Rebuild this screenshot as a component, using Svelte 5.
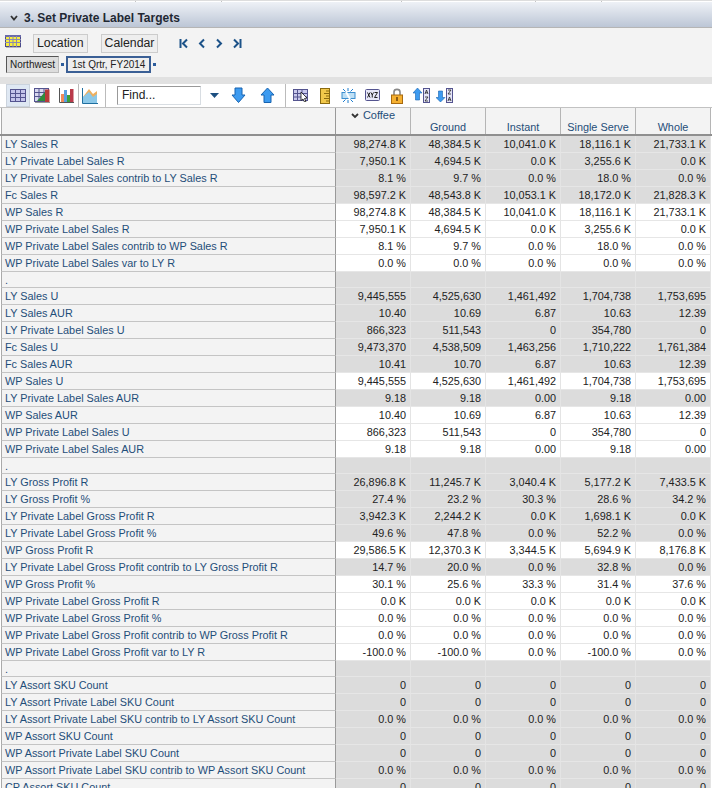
<script>
  const g = 1, w = 0;
  const rows = [
    ['LY Sales R', g, ['98,274.8 K','48,384.5 K','10,041.0 K','18,116.1 K','21,733.1 K']],
    ['LY Private Label Sales R', g, ['7,950.1 K','4,694.5 K','0.0 K','3,255.6 K','0.0 K']],
    ['LY Private Label Sales contrib to LY Sales R', g, ['8.1 %','9.7 %','0.0 %','18.0 %','0.0 %']],
    ['Fc Sales R', g, ['98,597.2 K','48,543.8 K','10,053.1 K','18,172.0 K','21,828.3 K']],
    ['WP Sales R', w, ['98,274.8 K','48,384.5 K','10,041.0 K','18,116.1 K','21,733.1 K']],
    ['WP Private Label Sales R', w, ['7,950.1 K','4,694.5 K','0.0 K','3,255.6 K','0.0 K']],
    ['WP Private Label Sales contrib to WP Sales R', w, ['8.1 %','9.7 %','0.0 %','18.0 %','0.0 %']],
    ['WP Private Label Sales var to LY R', w, ['0.0 %','0.0 %','0.0 %','0.0 %','0.0 %']],
    ['.', g, ['','','','','']],
    ['LY Sales U', g, ['9,445,555','4,525,630','1,461,492','1,704,738','1,753,695']],
    ['LY Sales AUR', g, ['10.40','10.69','6.87','10.63','12.39']],
    ['LY Private Label Sales U', g, ['866,323','511,543','0','354,780','0']],
    ['Fc Sales U', g, ['9,473,370','4,538,509','1,463,256','1,710,222','1,761,384']],
    ['Fc Sales AUR', g, ['10.41','10.70','6.87','10.63','12.39']],
    ['WP Sales U', w, ['9,445,555','4,525,630','1,461,492','1,704,738','1,753,695']],
    ['LY Private Label Sales AUR', g, ['9.18','9.18','0.00','9.18','0.00']],
    ['WP Sales AUR', w, ['10.40','10.69','6.87','10.63','12.39']],
    ['WP Private Label Sales U', w, ['866,323','511,543','0','354,780','0']],
    ['WP Private Label Sales AUR', w, ['9.18','9.18','0.00','9.18','0.00']],
    ['.', g, ['','','','','']],
    ['LY Gross Profit R', g, ['26,896.8 K','11,245.7 K','3,040.4 K','5,177.2 K','7,433.5 K']],
    ['LY Gross Profit %', g, ['27.4 %','23.2 %','30.3 %','28.6 %','34.2 %']],
    ['LY Private Label Gross Profit R', g, ['3,942.3 K','2,244.2 K','0.0 K','1,698.1 K','0.0 K']],
    ['LY Private Label Gross Profit %', g, ['49.6 %','47.8 %','0.0 %','52.2 %','0.0 %']],
    ['WP Gross Profit R', w, ['29,586.5 K','12,370.3 K','3,344.5 K','5,694.9 K','8,176.8 K']],
    ['LY Private Label Gross Profit contrib to LY Gross Profit R', g, ['14.7 %','20.0 %','0.0 %','32.8 %','0.0 %']],
    ['WP Gross Profit %', w, ['30.1 %','25.6 %','33.3 %','31.4 %','37.6 %']],
    ['WP Private Label Gross Profit R', w, ['0.0 K','0.0 K','0.0 K','0.0 K','0.0 K']],
    ['WP Private Label Gross Profit %', w, ['0.0 %','0.0 %','0.0 %','0.0 %','0.0 %']],
    ['WP Private Label Gross Profit contrib to WP Gross Profit R', w, ['0.0 %','0.0 %','0.0 %','0.0 %','0.0 %']],
    ['WP Private Label Gross Profit var to LY R', w, ['-100.0 %','-100.0 %','0.0 %','-100.0 %','0.0 %']],
    ['.', g, ['','','','','']],
    ['LY Assort SKU Count', g, ['0','0','0','0','0']],
    ['LY Assort Private Label SKU Count', g, ['0','0','0','0','0']],
    ['LY Assort Private Label SKU contrib to LY Assort SKU Count', g, ['0.0 %','0.0 %','0.0 %','0.0 %','0.0 %']],
    ['WP Assort SKU Count', g, ['0','0','0','0','0']],
    ['WP Assort Private Label SKU Count', g, ['0','0','0','0','0']],
    ['WP Assort Private Label SKU contrib to WP Assort SKU Count', g, ['0.0 %','0.0 %','0.0 %','0.0 %','0.0 %']],
    ['CP Assort SKU Count', g, ['0','0','0','0','0']]
  ];
  const heads = ['Ground','Instant','Single Serve','Whole'];
</script>

<div class="page">
  <div class="ticks"><span class="t1"></span><span class="t2"></span><span class="t3"></span><span class="t4"></span><span class="t5"></span></div>
  <header class="title">
    <svg class="chev" width="8" height="6" viewBox="0 0 8 6"><path d="M1 1 4 4.500 7 1" fill="none" stroke="#333" stroke-width="1.800"/></svg>
    <h1>3. Set Private Label Targets</h1>
  </header>

  <section class="pov">
    <div class="pov-top">
      <svg class="grid-ico" width="16" height="13" viewBox="0 0 16 13">
        <rect x="0.5" y="0.5" width="15" height="11" fill="#f7ee3c" stroke="#4a4a8c"/>
        <rect x="0" y="0" width="16" height="2" fill="#6a6aa8"/>
        <path d="M0 4.500H16M0 7.500H16M4.500 1V12M8 1V12M11.500 1V12" stroke="#8a8ab0" stroke-width="1"/>
        <path d="M1 12.500H16" stroke="#bbb"/>
      </svg>
      <button class="dim">Location</button>
      <button class="dim cal">Calendar</button>
      <div class="nav">
        <svg width="10" height="11" viewBox="0 0 10 11"><path d="M1.500 1V10" stroke="#1c5288" stroke-width="2"/><path d="M8 1.500 4 5.500 8 9.500" fill="none" stroke="#1c5288" stroke-width="2"/></svg>
        <svg width="8" height="11" viewBox="0 0 8 11"><path d="M6 1.500 2 5.500 6 9.500" fill="none" stroke="#1c5288" stroke-width="2"/></svg>
        <svg width="8" height="11" viewBox="0 0 8 11"><path d="M2 1.500 6 5.500 2 9.500" fill="none" stroke="#1c5288" stroke-width="2"/></svg>
        <svg width="10" height="11" viewBox="0 0 10 11"><path d="M2 1.500 6 5.500 2 9.500" fill="none" stroke="#1c5288" stroke-width="2"/><path d="M8.500 1V10" stroke="#1c5288" stroke-width="2"/></svg>
      </div>
    </div>
    <div class="pov-bottom">
      <span class="chip">Northwest</span><i class="dot"></i>
      <span class="chip sel">1st Qrtr, FY2014</span><i class="dot"></i>
    </div>
  </section>
  <div class="gap"></div>

  <div class="toolbar">
    <span class="tb first active">
      <svg width="16" height="13" viewBox="0 0 16 13"><rect x=".5" y=".5" width="15" height="12" fill="#c4c4ea" stroke="#54548f"/><path d="M0 4.500H16M0 8.500H16M5.500 0V13M10.500 0V13" stroke="#54548f"/></svg>
    </span>
    <span class="tb second">
      <svg width="16" height="15" viewBox="0 0 16 15"><rect x=".5" y=".5" width="14" height="13" fill="#d8d8ee" stroke="#54548f"/><path d="M0 4.500H14M0 8.500H14M5 0V13M10 0V13" stroke="#54548f"/><path d="M3 13 11 4V13Z" fill="#2f8c3c"/><path d="M11 1.500H15.500V14H11Z" fill="#b93a3a"/><path d="M1 14.500H16" stroke="#999"/></svg>
    </span>
    <span class="tb sep third">
      <svg width="15" height="15" viewBox="0 0 15 15"><path d="M.5 0V14.500H15" fill="none" stroke="#555"/><rect x="2" y="6" width="3" height="8" fill="#f08a5a"/><rect x="5" y="2" width="3" height="12" fill="#5aa0e0"/><rect x="8" y="7" width="3" height="7" fill="#3aa03a"/><rect x="11" y="1" width="3.500" height="13" fill="#b93a4a"/></svg>
    </span>
    <span class="tb sep fourth">
      <svg width="16" height="16" viewBox="0 0 16 16"><path d="M.5 0V15.500H16" fill="none" stroke="#1f6f9f"/><path d="M1 9 7 1 11 6 15 3V9Z" fill="#eeb060"/><path d="M1 15V9L7 4 11 9 15 6V15Z" fill="#8cc8e8"/></svg>
    </span>
    <span class="find">Find...</span>
    <svg class="drop" width="9" height="5" viewBox="0 0 9 5"><path d="M0 0H9L4.500 5Z" fill="#1c4f80"/></svg>
    <svg class="arrow" width="15" height="17" viewBox="0 0 15 17"><path d="M4 1H11V8H14L7.500 15.500 1 8H4Z" fill="#3d9bf0" stroke="#1763b0"/></svg>
    <svg class="arrow up" width="15" height="17" viewBox="0 0 15 17"><path d="M7.500 1 14 8H11V15.500H4V8H1Z" fill="#3d9bf0" stroke="#1763b0"/></svg>
    <span class="bar"></span>
    <span class="icons">
      <svg class="i1" width="15" height="13" viewBox="0 0 15 13"><rect x=".5" y=".5" width="14" height="11" fill="#c9c9ec" stroke="#54548f"/><path d="M0 4.500H14M0 8H14M4.500 0V12M9 0V12" stroke="#54548f"/><path d="M8 3 14 9 11.500 9.500 13 12.500 11.500 13 10 10 8 11.500Z" fill="#fff" stroke="#111" stroke-width=".8"/></svg>
      <svg class="i2" width="10" height="16" viewBox="0 0 10 16"><rect x=".5" y=".5" width="9" height="15" fill="#f2c84a" stroke="#8a6a10"/><path d="M6 3H9M4 5.500H9M6 8H9M4 10.500H9M6 13H9" stroke="#8a6a10"/></svg>
      <svg class="i3" width="15" height="15" viewBox="0 0 15 15"><rect x="1" y="4.500" width="13" height="6" fill="#bfe0f5" stroke="#3d8fd0"/><path d="M7 0V3M2 1 4.500 3.500M12 1 9.500 3.500M7 12V15M2 14 4.500 11.500M12 14 9.500 11.500" stroke="#1f7fd0"/><path d="M5 4 9 11" stroke="#fff" stroke-width="2"/></svg>
      <svg class="i4" width="15" height="13" viewBox="0 0 15 13"><rect x=".5" y=".5" width="14" height="11" rx="1" fill="#e6e6f8" stroke="#54548f"/><path d="M2.500 3.500 5 8.500M5 3.500 2.500 8.500M6 3.500 7.250 6V8.500M8.500 3.500 7.250 6M9.500 3.500H12.500L9.500 8.500H12.500" fill="none" stroke="#222" stroke-width="1"/></svg>
      <svg class="i5" width="12" height="16" viewBox="0 0 12 16"><path d="M3 7V4C3 .5 9 .5 9 4V7" fill="none" stroke="#888" stroke-width="1.600"/><rect x=".5" y="7" width="11" height="8.500" fill="#f5b030" stroke="#a86a10"/><path d="M6 9V13" stroke="#6a4008" stroke-width="1.500"/></svg>
      <svg class="i6" width="17" height="15" viewBox="0 0 17 15"><path d="M4.500 0 9 5H6.500V12H2.500V5H0Z" fill="#3d9bf0" stroke="#1763b0" stroke-width=".6"/><rect x="10.500" y=".5" width="6" height="14" fill="#e6e6f8" stroke="#54548f"/><path d="M12 6 13.500 2 15 6M12.500 4.800H14.500M12 9H15L12 13H15" fill="none" stroke="#222" stroke-width=".8"/></svg>
      <svg class="i7" width="17" height="15" viewBox="0 0 17 15"><path d="M2.500 3V9.500H0L4.500 14 9 9.500H6.500V3Z" fill="#3d9bf0" stroke="#1763b0" stroke-width=".6"/><rect x="10.500" y=".5" width="6" height="14" fill="#e6e6f8" stroke="#54548f"/><path d="M12 2H15L12 6H15M12 13 13.500 9 15 13M12.500 11.800H14.500" fill="none" stroke="#222" stroke-width=".8"/></svg>
    </span>
  </div>

  <div class="table">
    <div class="row head">
      <div class="label"></div>
      <div class="hcell top">
        <svg width="8" height="6" viewBox="0 0 8 6"><path d="M1 1 4 4 7 1" fill="none" stroke="#333" stroke-width="1.800"/></svg>
        <span>Coffee</span>
      </div>
      {#each heads as h}<div class="hcell">{h}</div>{/each}
    </div>
    {#each rows as r}
      <div class="row" class:short={r[0] === '.'}>
        <div class="label">{r[0]}</div>
        {#each r[2] as v}<div class="cell" class:grey={r[1]}>{v}</div>{/each}
      </div>
    {/each}
  </div>
</div>

<style>
  :global(body) { margin: 0; background: #fff; }
  .page { width: 712px; height: 788px; overflow: hidden; font-family: "Liberation Sans", Arial, sans-serif; font-size: 10.85px; color: #222; }
  .ticks { height: 2px; display: flex; background: #fff; border-top: 1px solid #ddd; box-sizing: border-box; }
  .ticks span { width: 1px; background: #c4c4c4; }
  .t1 { margin-left: 135px; } .t2 { margin-left: 85px; } .t3 { margin-left: 179px; } .t4 { margin-left: 133px; } .t5 { margin-left: 65px; }
  .title { height: 26px; background: linear-gradient(#eef1f6, #bcc6d6); border-bottom: 1px solid #b5b5b5; box-sizing: border-box; display: flex; align-items: center; padding: 6px 0 0 10px; }
  .chev { margin-right: 6px; }
  h1 { margin: 0; font-size: 12px; font-weight: bold; color: #1f2833; }
  .pov { height: 49px; background: #f3f3f3; box-sizing: border-box; padding: 5px 0 0 5px; }
  .pov-top { display: flex; align-items: center; height: 20px; }
  .grid-ico { margin-bottom: 3px; }
  .dim { height: 19px; font: 12.3px "Liberation Sans", Arial, sans-serif; color: #222; background: #eee; border: 1px solid #ccc; padding: 0 3px; margin-left: 12px; }
  .cal { margin-left: 13px; }
  .nav { display: flex; align-items: center; gap: 9px; margin-left: 21px; }
  .pov-bottom { display: flex; align-items: center; margin-top: 3px; }
  .chip { height: 17px; line-height: 16px; box-sizing: border-box; font-size: 10px; padding: 0 3px; background: #ddd; border: 1px solid #bbb; border-left-color: #555; border-top-color: #555; color: #222; margin-left: 1px; }
  .sel { border: 2px solid #3a5f95; background: #eee; padding: 0 4px; line-height: 13px; margin-left: 2px; height: 17px; }
  .dot { width: 3px; height: 3px; background: #2b5c9c; margin-left: 2px; }
  .gap { height: 7px; background: #e1e1e1; }
  .toolbar { height: 23px; display: flex; align-items: center; background: #fff; }
  .tb { height: 23px; box-sizing: border-box; display: flex; align-items: center; flex: none; justify-content: center; }
  .first { margin-left: 6px; width: 24px; }
  .active { background: #dfe8f3; border: 1px solid #cbd3dd; }
  .second { width: 24px; }
  .tb.sep { border-right: 1px solid #bbb; }
  .third { width: 25px; }
  .fourth { width: 27px; padding-right: 4px; }
  .find { width: 84px; height: 19px; line-height: 17px; box-sizing: border-box; border: 1px solid #d8dde2; border-top-color: #999; border-left-color: #999; margin-left: 11px; padding-left: 4px; font-size: 12px; color: #222; }
  .drop { margin-left: 9px; }
  .arrow { margin-left: 12px; }
  .arrow.up { margin-left: 14px; }
  .bar { width: 1px; height: 23px; background: #bbb; margin-left: 10px; }
  .icons { display: flex; align-items: center; margin-left: 7px; }
  .i2 { margin-left: 12px; } .i3 { margin-left: 11px; } .i4 { margin-left: 9px; } .i5 { margin-left: 11px; } .i6 { margin-left: 10px; } .i7 { margin-left: 6px; }
  .table { border-top: 1px solid #c2c2c2; }
  .row { display: flex; height: 17px; }
  .row.short { height: 16px; }
  .row.head { height: 28px; box-sizing: border-box; border-bottom: 2px solid #8f8f8f; }
  .label { width: 335px; flex: none; box-sizing: border-box; background: #f3f3f3; border-left: 1px solid #aaa; border-right: 1px solid #999; border-bottom: 1px solid #c4c4c4; padding-left: 3px; line-height: 16px; color: #1f4e79; margin-left: 1px; white-space: nowrap; }
  .head .label { border-bottom: none; }
  .cell { width: 75px; flex: none; box-sizing: border-box; text-align: right; padding-right: 4px; line-height: 16px; border-right: 1px solid #e4e4e4; border-bottom: 1px solid #e6e6e6; background: #fff; }
  .cell.grey { background: #dcdcdc; }
  .hcell { width: 75px; flex: none; box-sizing: border-box; background: #f3f3f3; border-right: 1px solid #b5b5b5; color: #1f4e79; text-align: center; padding-top: 12px; line-height: 14px; }
  .hcell.top { padding-top: 0; display: flex; align-items: center; align-self: stretch; justify-content: center; gap: 4px; }
  .hcell.top svg, .hcell.top span { align-self: flex-start; }
  .hcell.top svg { margin-top: 5px; }
  .hcell.top span { font-size: 11px; }
</style>
